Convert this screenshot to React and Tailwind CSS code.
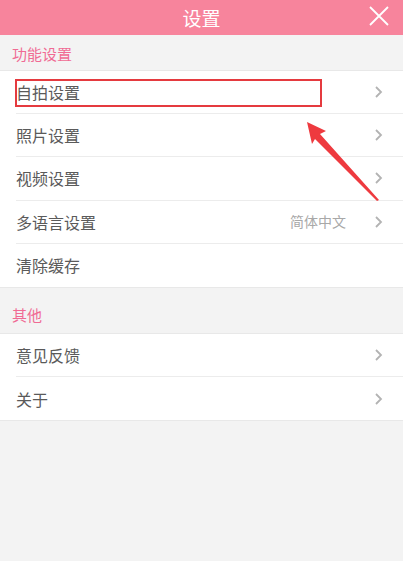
import React from "react";

const groups = [
  {
    title: "功能设置",
    items: [
      { name: "自拍设置", arrow: true },
      { name: "照片设置", arrow: true },
      { name: "视频设置", arrow: true },
      { name: "多语言设置", value: "简体中文", arrow: true },
      { name: "清除缓存", arrow: false },
    ],
  },
  {
    title: "其他",
    items: [
      { name: "意见反馈", arrow: true },
      { name: "关于", arrow: true },
    ],
  },
];

const font = { fontFamily: '"Noto Sans CJK SC", "Noto Sans", sans-serif' };

const Chevron = () => (
  <svg width="9" height="14" viewBox="0 0 9 14" className="text-[#b3b3b3]">
    <path d="M2 2l5 5-5 5" fill="none" stroke="currentColor" strokeWidth="1.8" />
  </svg>
);

const App = () => {
  return (
    <div className="relative w-[403px] h-[561px] bg-[#f3f3f3] overflow-hidden" style={font}>
      <div className="relative h-[35px] bg-[#f7849c] flex items-center justify-center">
        <span className="text-white text-[19px] leading-none">设置</span>
        <svg
          className="absolute right-[13px] top-[5px]"
          width="22"
          height="22"
          viewBox="0 0 22 22"
        >
          <path d="M2 2L20 20M20 2L2 20" stroke="white" strokeWidth="1.8" />
        </svg>
      </div>

      {groups.map((group, i) => (
        <div key={i}>
          <div
            className={`flex items-end px-3 text-[15px] text-[#f06b94] ${
              i === 0 ? "h-[35px] pb-[5px]" : "h-[45px] pb-[6px]"
            }`}
          >
            {group.title}
          </div>
          <div className="bg-white border-t border-b border-[#e8e8e8]">
            {group.items.map((item, j) => (
              <div key={j} className="pl-4">
                <div
                  className={`flex items-center h-[43.2px] pr-[20px] ${
                    j < group.items.length - 1 ? "border-b border-[#ececec]" : ""
                  }`}
                >
                  <span className="text-[16px] text-[#5a5a5a] flex-1">{item.name}</span>
                  {item.value && (
                    <span className="text-[14px] text-[#a8a8a8] mr-[28px]">{item.value}</span>
                  )}
                  {item.arrow && <Chevron />}
                </div>
              </div>
            ))}
          </div>
        </div>
      ))}

      {/* annotation overlay */}
      <div className="absolute left-[15px] top-[79px] w-[307px] h-[28px] border-2 border-[#e53a3f]" />
      <svg className="absolute left-0 top-0" width="403" height="561" viewBox="0 0 403 561">
        <polygon
          points="307,122 326,131 320,134 379,200 377,201 315,139 312,144"
          fill="#ee3a3f"
        />
      </svg>
    </div>
  );
};

export default App;
